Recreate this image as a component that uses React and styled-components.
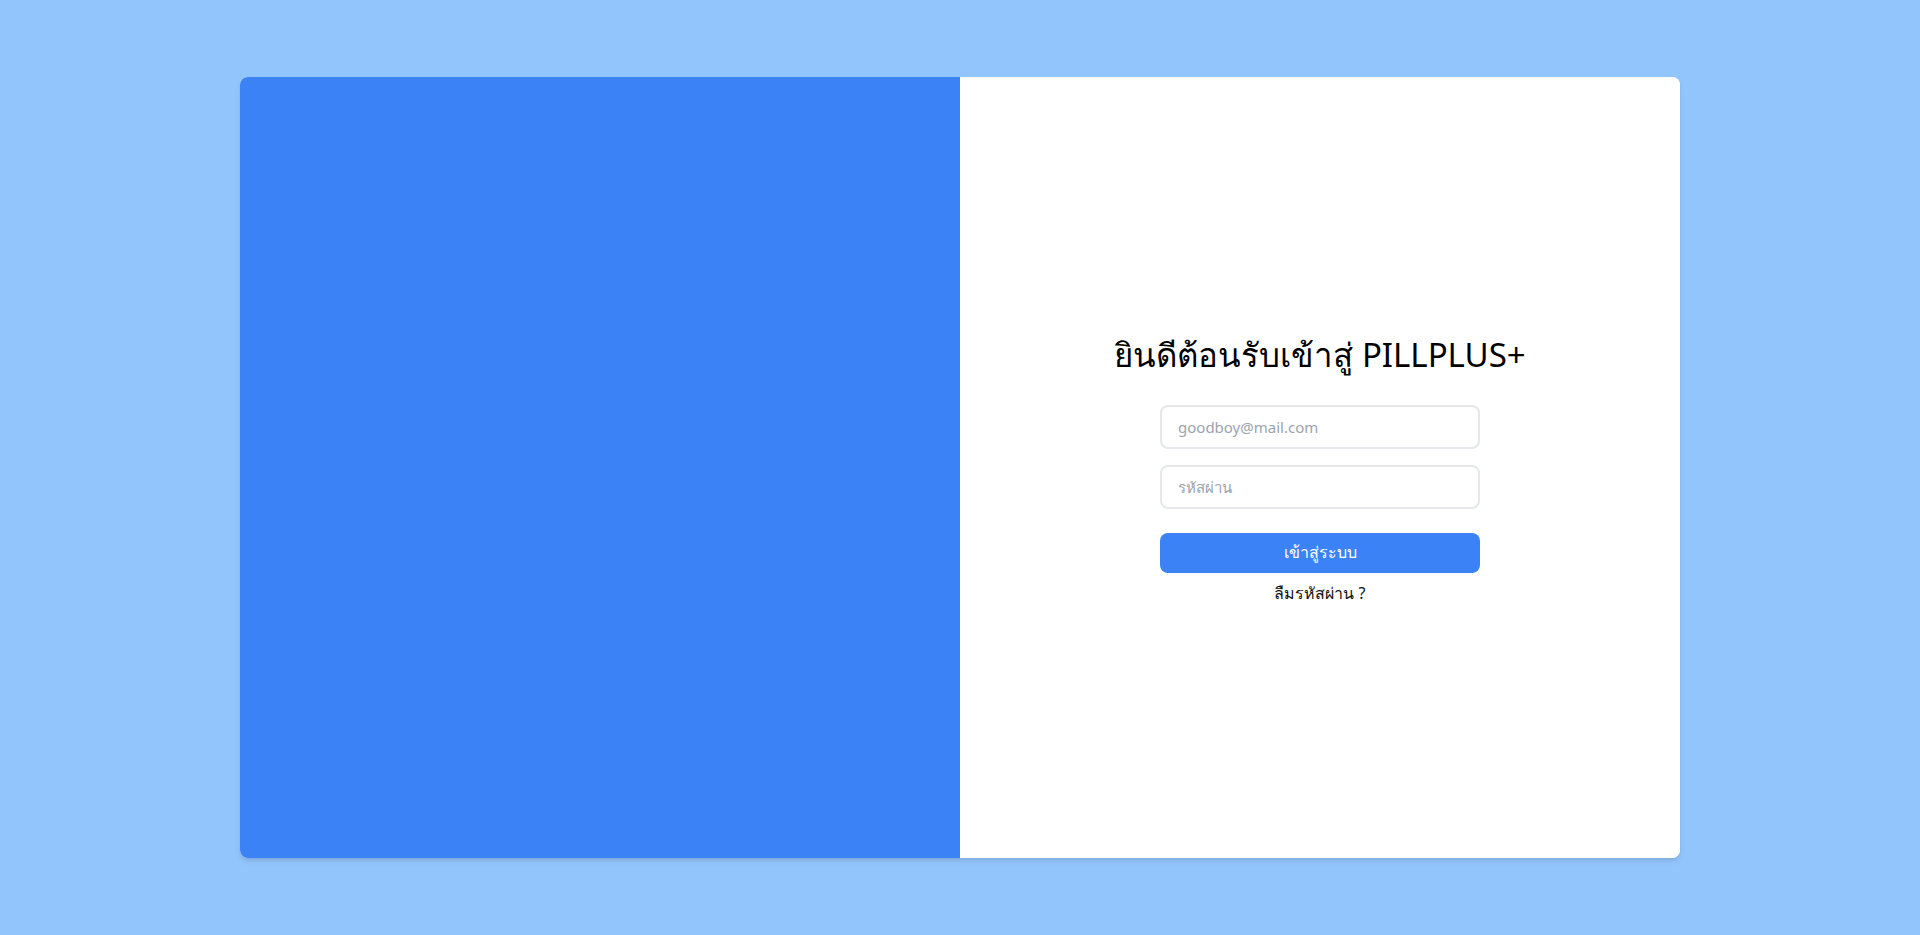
import React from "react";
import styled, { createGlobalStyle } from "styled-components";

const GlobalStyle = createGlobalStyle`
  html, body {
    margin: 0;
    padding: 0;
  }
  body {
    background: #93c5fd;
    font-family: "Noto Sans", "Open Sans", sans-serif;
  }
  * { box-sizing: border-box; }
`;

const Page = styled.div`
  min-height: 100vh;
  display: flex;
  align-items: center;
  justify-content: center;
  background: #93c5fd;
`;

const Card = styled.div`
  width: 1440px;
  height: 781px;
  display: grid;
  grid-template-columns: 1fr 1fr;
  border-radius: 8px;
  overflow: hidden;
  background: #ffffff;
  box-shadow: 0 4px 6px -1px rgba(0, 0, 0, 0.1), 0 2px 4px -2px rgba(0, 0, 0, 0.1);
`;

const BluePanel = styled.div`
  background: #3b82f6;
`;

const FormPanel = styled.div`
  display: flex;
  flex-direction: column;
  align-items: center;
  justify-content: center;
  background: #ffffff;
`;

const Title = styled.h1`
  margin: 0 0 26px;
  font-size: 33px;
  font-weight: 400;
  line-height: 48px;
  color: #000000;
`;

const Form = styled.form`
  width: 320px;
  display: flex;
  flex-direction: column;
`;

const Input = styled.input`
  width: 100%;
  height: 44px;
  padding: 0 16px;
  border: 2px solid #e5e7eb;
  border-radius: 8px;
  font-family: inherit;
  font-size: 15px;
  color: #111827;
  outline: none;
  margin-bottom: ${(p) => p.$gap}px;
  &::placeholder {
    color: #9ca3af;
  }
`;

const Button = styled.button`
  width: 100%;
  height: 40px;
  border: none;
  border-radius: 8px;
  background: #3b82f6;
  color: #ffffff;
  font-family: inherit;
  font-size: 16px;
  font-weight: 500;
  cursor: pointer;
`;

const Forgot = styled.a`
  margin-top: 8px;
  text-align: center;
  font-size: 16px;
  font-weight: 400;
  line-height: 24px;
  color: #111111;
  text-decoration: none;
  cursor: pointer;
`;

export default function App() {
  return (
    <>
      <GlobalStyle />
      <Page>
        <Card>
          <BluePanel />
          <FormPanel>
            <Title>ยินดีต้อนรับเข้าสู่ PILLPLUS+</Title>
            <Form onSubmit={(e) => e.preventDefault()}>
              <Input type="email" placeholder="goodboy@mail.com" $gap={16} />
              <Input type="password" placeholder="รหัสผ่าน" $gap={24} />
              <Button type="submit">เข้าสู่ระบบ</Button>
              <Forgot>ลืมรหัสผ่าน ?</Forgot>
            </Form>
          </FormPanel>
        </Card>
      </Page>
    </>
  );
}
